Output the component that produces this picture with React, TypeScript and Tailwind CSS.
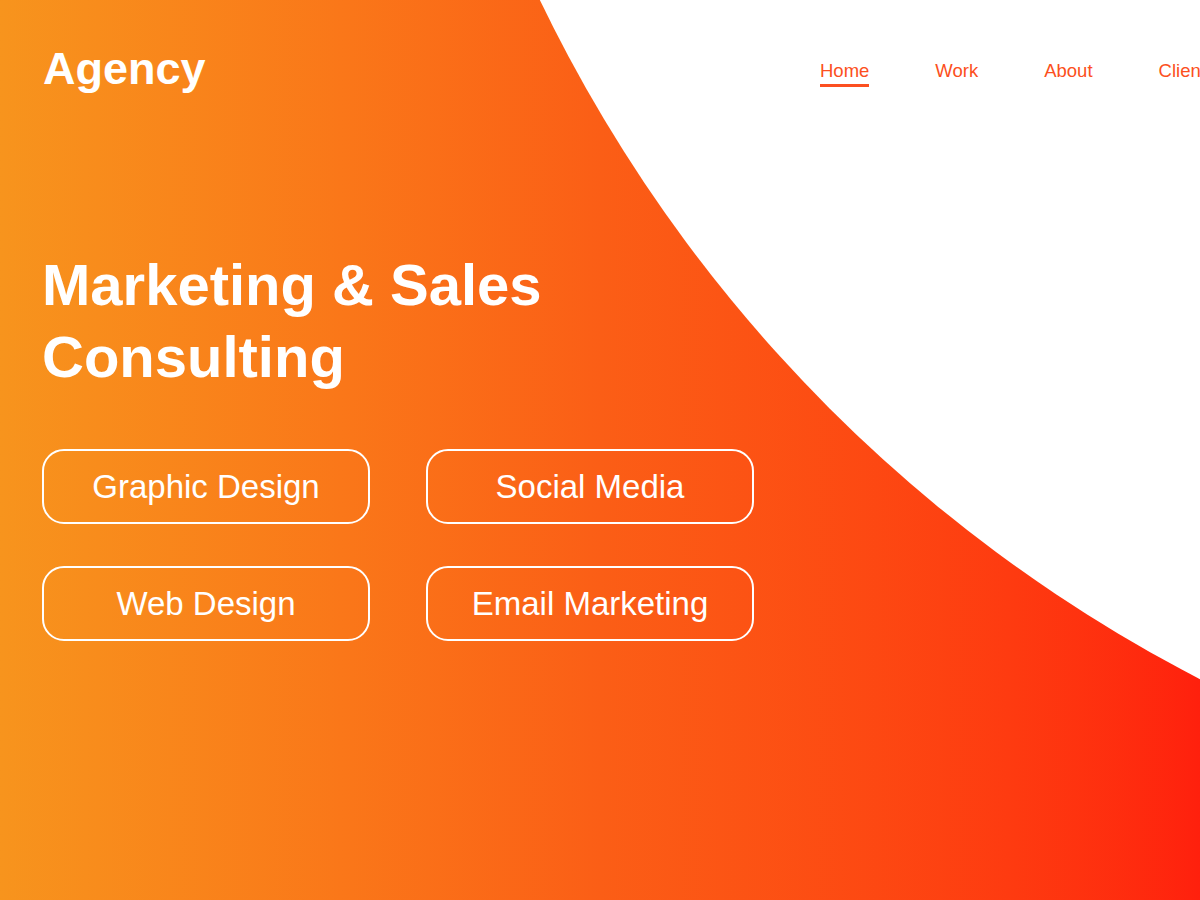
const navItems = ['Home', 'Work', 'About', 'Clients'];
const services = ['Graphic Design', 'Social Media', 'Web Design', 'Email Marketing'];

function Blob() {
  return (
    <svg
      className="absolute inset-0 h-full w-full"
      viewBox="0 0 1200 900"
      preserveAspectRatio="none"
      aria-hidden="true"
    >
      <circle cx="1886" cy="-648" r="1494" fill="#ffffff" />
    </svg>
  );
}

export default function App() {
  return (
    <div
      className="relative h-[900px] w-full overflow-hidden bg-gradient-to-r from-[#f7941d] via-[#fb5e16] to-[#ff200d] text-white"
      style={{ fontFamily: '"Liberation Sans", Arial, Helvetica, sans-serif' }}
    >
      <Blob />

      <div className="relative pl-[42px]">
        <header className="flex items-start pt-[46px]">
          <div className="w-[778px] shrink-0 pl-[1px] text-[45px] font-bold leading-none">
            Agency
          </div>
          <nav className="mt-[16px] flex shrink-0 gap-[66px] whitespace-nowrap text-[18.5px] leading-none text-[#fc4f20]">
            {navItems.map((item, i) => (
              <a
                key={item}
                href="#"
                className={i === 0 ? 'border-b-[3px] border-[#fc4f20] pb-[3px]' : 'pb-[6px]'}
              >
                {item}
              </a>
            ))}
          </nav>
        </header>

        <h1 className="mt-[158px] text-[58px] font-bold leading-[72px]">
          Marketing &amp; Sales
          <br />
          Consulting
        </h1>

        <div className="mt-[56px] grid grid-cols-[328px_328px] gap-x-[56px] gap-y-[42px]">
          {services.map((s) => (
            <button
              key={s}
              type="button"
              className="flex h-[75px] items-center justify-center rounded-[22px] border-2 border-white text-[33px] leading-none"
            >
              {s}
            </button>
          ))}
        </div>
      </div>
    </div>
  );
}
